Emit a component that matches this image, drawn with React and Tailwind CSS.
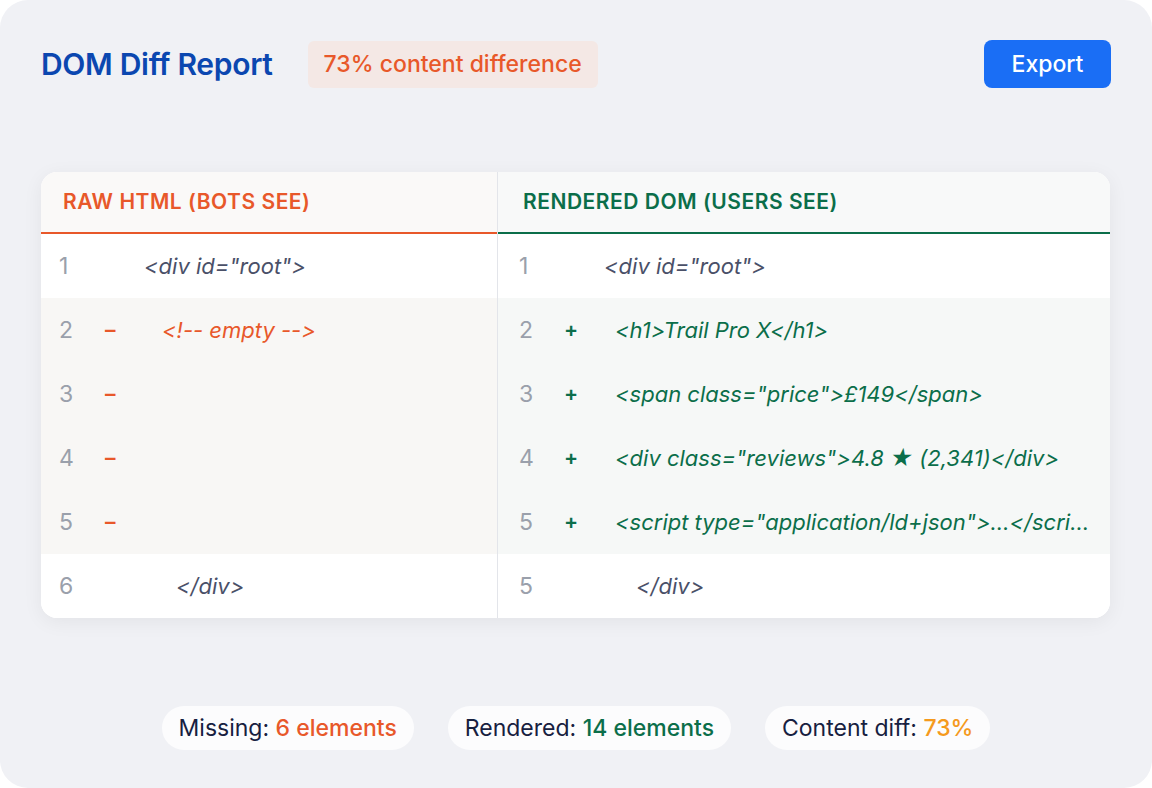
export default function App() {
  const f = { fontFamily: "Inter, 'Noto Sans', sans-serif", fontVariantLigatures: "none", fontFeatureSettings: "'calt' 0, 'liga' 0" };
  const L = "text-[#e8582a]", G = "text-[#0b6e4a]", D = "text-[#4a5068]";
  const left = [
    ["1", "", '<div id="root">', D, 0, false],
    ["2", "–", "<!-- empty -->", L, 18, true],
    ["3", "–", "", L, 0, true],
    ["4", "–", "", L, 0, true],
    ["5", "–", "", L, 0, true],
    ["6", "", "</div>", D, 32, false],
  ];
  const right = [
    ["1", "", '<div id="root">', D, 0, false],
    ["2", "+", "<h1>Trail Pro X</h1>", G, 11, true],
    ["3", "+", '<span class="price">£149</span>', G, 11, true],
    ["4", "+", '<div class="reviews">4.8 ★ (2,341)</div>', G, 11, true],
    ["5", "+", '<script type="application/ld+json">…</script>', G, 11, true],
    ["5", "", "</div>", D, 32, false],
  ];
  const rows = (data, side) =>
    data.map(([n, m, c, col, p, s], i) => (
      <div key={i} className={`flex items-center h-16 pr-3 ${s ? (side === "l" ? "bg-[#f8f7f5]" : "bg-[#f6f8f7]") : "bg-white"}`}>
        <span className={`shrink-0 text-[23px] text-[#9aa0ab] ${side === "l" ? "w-[64px] pl-[18px]" : "w-[66px] pl-[21px]"}`}>{n}</span>
        <span className={`shrink-0 text-[21px] font-semibold ${col} ${side === "l" ? "w-[39px]" : "w-[40px]"}`}>{m}</span>
        <span className={`italic text-[22px] whitespace-nowrap overflow-hidden text-ellipsis ${col}`} style={{ paddingLeft: p }}>{c}</span>
      </div>
    ));
  return (
    <div className="w-[1152px] h-[788px] bg-white" style={f}>
      <div className="w-full h-full rounded-[28px] bg-[#f0f1f5] px-[41px] pt-10 flex flex-col">
        <div className="flex items-center h-12">
          <h1 className="text-[30px] font-semibold text-[#0b47b0] tracking-[-0.3px]">DOM Diff Report</h1>
          <span className="ml-[35px] bg-[#f4e8e5] rounded-md h-[47px] px-4 flex items-center text-[23px] font-medium text-[#e8582a]">73% content difference</span>
          <button className="ml-auto bg-[#1a6ef5] text-white text-[23px] font-medium rounded-lg w-[127px] h-[48px]">Export</button>
        </div>
        <div className="mt-[84px] w-[1069px] bg-white rounded-2xl shadow-[0_4px_20px_rgba(0,0,0,0.06)] overflow-hidden flex">
          <div className="w-[457px] shrink-0 border-r border-[#e3e5ea]">
            <div className="h-[62px] bg-[#faf9f8] border-b-2 border-[#e8582a] flex items-center pl-[22px] text-[21px] font-semibold text-[#e8582a] tracking-wide">RAW HTML (BOTS SEE)</div>
            {rows(left, "l")}
          </div>
          <div className="flex-1 min-w-0">
            <div className="h-[62px] bg-[#f8f9f9] border-b-2 border-[#0b6e4a] flex items-center pl-[25px] text-[21px] font-semibold text-[#0b6e4a] tracking-wide">RENDERED DOM (USERS SEE)</div>
            {rows(right, "r")}
          </div>
        </div>
        <div className="mt-[88px] flex justify-center gap-[34px] text-[23px] text-[#172040]">
          <span className="bg-white/80 rounded-full h-[44px] px-[17px] flex items-center">Missing:&nbsp;<span className="font-medium text-[#e8582a]">6 elements</span></span>
          <span className="bg-white/80 rounded-full h-[44px] px-[17px] flex items-center">Rendered:&nbsp;<span className="font-medium text-[#0b6e4a]">14 elements</span></span>
          <span className="bg-white/80 rounded-full h-[44px] px-[17px] flex items-center">Content diff:&nbsp;<span className="font-medium text-[#f59a1d]">73%</span></span>
        </div>
      </div>
    </div>
  );
}
